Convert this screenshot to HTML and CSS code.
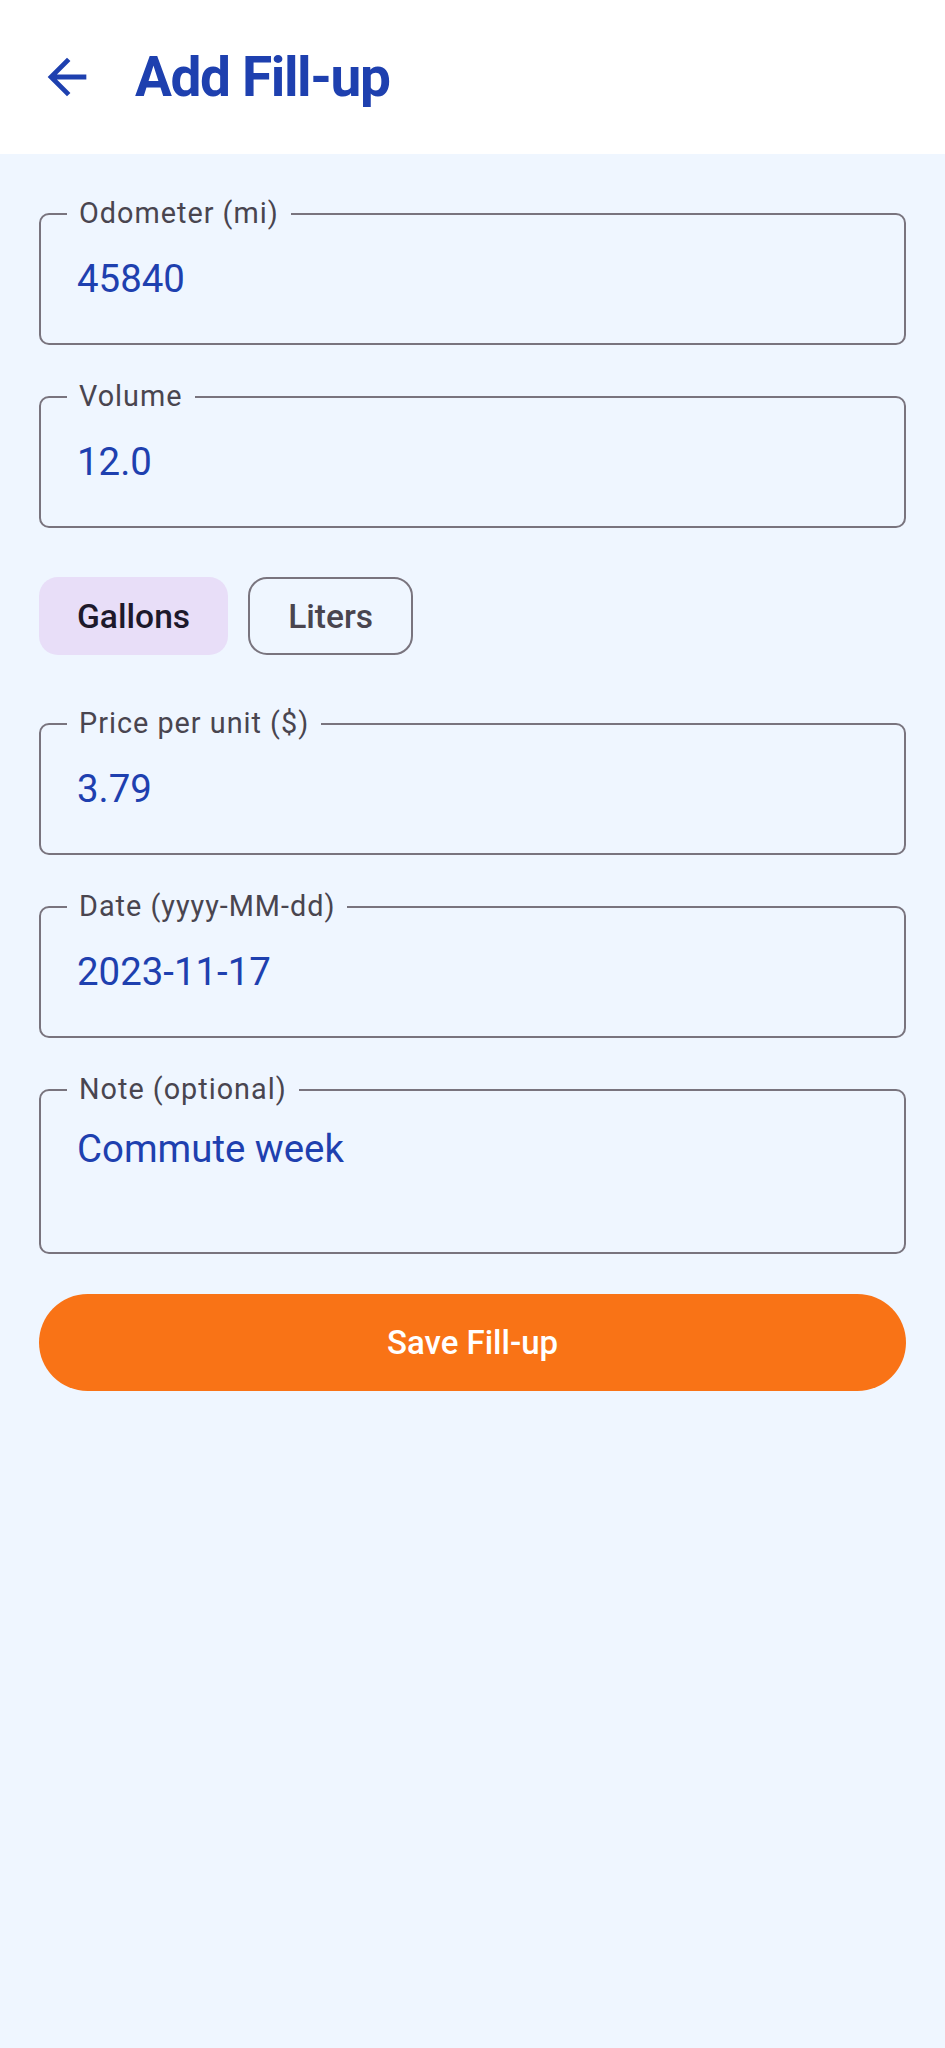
FILE: index.html
```html
<!DOCTYPE html>
<html lang="en">
<head>
<meta charset="utf-8">
<title>Add Fill-up</title>
<link rel="stylesheet" href="styles.css">
</head>
<body>
<header class="topbar">
  <button class="back" aria-label="Back">
    <svg viewBox="0 0 24 24" width="58" height="58"><path d="M20 11H7.83l5.59-5.59L12 4l-8 8 8 8 1.41-1.41L7.83 13H20v-2z" fill="#1E40AF"/></svg>
  </button>
  <h1 class="title">Add Fill-up</h1>
</header>
<main class="content">
  <div class="field f-first">
    <span class="field-label">Odometer (mi)</span>
    <div class="field-value">45840</div>
  </div>
  <div class="field f-gap">
    <span class="field-label">Volume</span>
    <div class="field-value">12.0</div>
  </div>
  <div class="chips">
    <span class="chip chip-selected">Gallons</span>
    <span class="chip chip-outline">Liters</span>
  </div>
  <div class="field f-after-chips">
    <span class="field-label">Price per unit ($)</span>
    <div class="field-value">3.79</div>
  </div>
  <div class="field f-gap">
    <span class="field-label">Date (yyyy-MM-dd)</span>
    <div class="field-value">2023-11-17</div>
  </div>
  <div class="field field-note f-gap">
    <span class="field-label">Note (optional)</span>
    <div class="field-value">Commute week</div>
  </div>
  <button class="save">Save Fill-up</button>
</main>
</body>
</html>
```

FILE: styles.css
```css
* { box-sizing: border-box; }
html, body { margin: 0; padding: 0; }
body {
  background: #EFF6FF;
  font-family: Roboto, "Noto Sans", sans-serif;
  min-height: 2048px;
}
.topbar {
  height: 154px;
  background: #FFFFFF;
  display: flex;
  align-items: center;
  padding-left: 38px;
}
.back {
  width: 58px;
  height: 58px;
  padding: 0;
  border: 0;
  background: none;
  display: flex;
}
.title {
  margin: 0 0 0 39px;
  font-size: 55px;
  font-weight: 700;
  letter-spacing: -1.4px;
  color: #1E40AF;
  line-height: 1.2;
}
.content {
  padding: 0 39px;
  display: flex;
  flex-direction: column;
}
.field {
  position: relative;
  height: 132px;
  border: 2px solid #79747E;
  border-radius: 10px;
  padding: 0 36px;
}
.f-first { margin-top: 59px; }
.f-gap { margin-top: 51px; }
.f-after-chips { margin-top: 68px; }
.field-label {
  position: absolute;
  left: 26px;
  top: -19px;
  padding: 0 12px;
  background: #EFF6FF;
  font-size: 28.8px;
  line-height: 34px;
  letter-spacing: 1px;
  color: #49454F;
}
.field-value {
  margin-top: 41px;
  font-size: 38.4px;
  line-height: 45px;
  color: #1E40AF;
}
.field-note { height: 165px; }
.field-note .field-value { margin-top: 35px; }
.chips {
  margin-top: 49px;
  display: flex;
  gap: 20px;
}
.chip {
  height: 78px;
  display: flex;
  align-items: center;
  padding: 0 38px;
  border-radius: 19px;
  font-size: 33.6px;
  font-weight: 500;
}
.chip-selected {
  background: #E8DEF8;
  color: #1D192B;
}
.chip-outline {
  border: 2px solid #79747E;
  color: #49454F;
}
.save {
  margin-top: 40px;
  height: 97px;
  border: 0;
  border-radius: 49px;
  background: #F97316;
  color: #FFFFFF;
  font-family: Roboto, "Noto Sans", sans-serif;
  font-size: 33px;
  font-weight: 500;
}
```
